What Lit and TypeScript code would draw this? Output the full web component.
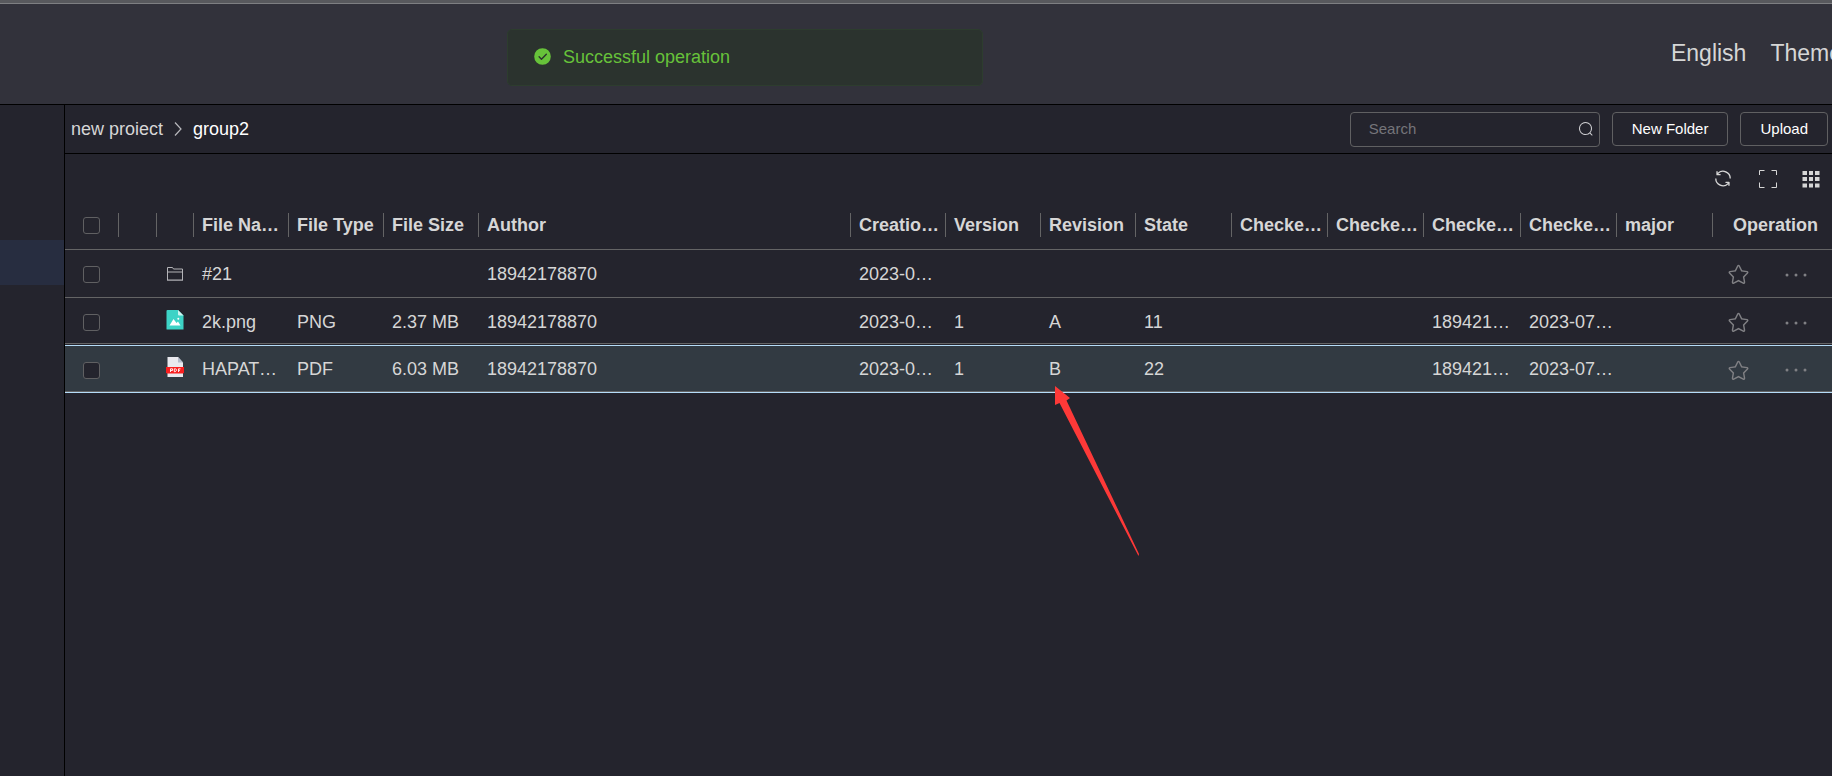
import { LitElement, html, css, svg, nothing } from "lit";
import { customElement, property, state } from "lit/decorators.js";
import { classMap } from "lit/directives/class-map.js";

interface FileRow {
  id: string;
  kind: "folder" | "image" | "pdf";
  cells: string[];
  selected?: boolean;
}

const COLUMNS: { label: string; cls: string }[] = [
  { label: "File Name", cls: "w-field" },
  { label: "File Type", cls: "w-field" },
  { label: "File Size", cls: "w-field" },
  { label: "Author", cls: "w-auto" },
  { label: "Creation Time", cls: "w-field" },
  { label: "Version", cls: "w-field" },
  { label: "Revision", cls: "w-field" },
  { label: "State", cls: "w-wide" },
  { label: "Checked Out By", cls: "w-wide" },
  { label: "Checked Out Time", cls: "w-wide" },
  { label: "Checked In By", cls: "w-last" },
  { label: "Checked In Time", cls: "w-wide" },
  { label: "major", cls: "w-wide" },
];

const ROWS: FileRow[] = [
  {
    id: "r1",
    kind: "folder",
    cells: ["#21", "", "", "18942178870", "2023-07-12", "", "", "", "", "", "", "", ""],
  },
  {
    id: "r2",
    kind: "image",
    cells: ["2k.png", "PNG", "2.37 MB", "18942178870", "2023-07-12", "1", "A", "11", "", "", "18942178870", "2023-07-12 10:20", ""],
  },
  {
    id: "r3",
    kind: "pdf",
    selected: true,
    cells: ["HAPATOM.pdf", "PDF", "6.03 MB", "18942178870", "2023-07-12", "1", "B", "22", "", "", "18942178870", "2023-07-12 10:20", ""],
  },
];

const P = {
  refresh: "M771.776 794.88A384 384 0 0 1 128 512h64a320 320 0 0 0 555.712 216.448H654.72a32 32 0 1 1 0-64h149.056a32 32 0 0 1 32 32v148.928a32 32 0 1 1-64 0v-50.56zM276.288 295.616h92.992a32 32 0 0 1 0 64H220.16a32 32 0 0 1-32-32V178.56a32 32 0 0 1 64 0v50.56A384 384 0 0 1 896.128 512h-64a320 320 0 0 0-555.776-216.384z",
  star: "m512 747.84 228.16 119.936a6.4 6.4 0 0 0 9.28-6.72l-43.52-254.08 184.512-179.904a6.4 6.4 0 0 0-3.52-10.88l-255.104-37.12L517.76 147.904a6.4 6.4 0 0 0-11.52 0L392.192 379.072l-255.104 37.12a6.4 6.4 0 0 0-3.52 10.88L318.08 606.976l-43.584 254.08a6.4 6.4 0 0 0 9.28 6.72L512 747.84zM313.6 924.48a70.4 70.4 0 0 1-102.144-74.24l37.888-220.928L88.96 472.96A70.4 70.4 0 0 1 128 352.896l221.76-32.256 99.2-200.96a70.4 70.4 0 0 1 126.208 0l99.2 200.96 221.824 32.256a70.4 70.4 0 0 1 39.04 120.064L774.72 629.376l37.888 220.928a70.4 70.4 0 0 1-102.144 74.24L512 820.096l-198.4 104.32z",
  search: "m795.904 750.72 124.992 124.928a32 32 0 0 1-45.248 45.248L750.656 795.904a416 416 0 1 1 45.248-45.248zM480 832a352 352 0 1 0 0-704 352 352 0 0 0 0 704z",
  success: "M512 64a448 448 0 1 1 0 896 448 448 0 0 1 0-896zm-55.808 536.384-99.52-99.584a38.4 38.4 0 1 0-54.336 54.336l126.72 126.72a38.272 38.272 0 0 0 54.336 0l262.4-262.464a38.4 38.4 0 1 0-54.272-54.336L456.192 600.384z",
};

const glyph = (d: string, cls: string) =>
  html`<svg class=${cls} viewBox="0 0 1024 1024" aria-hidden="true"><path fill="currentColor" d=${d}></path></svg>`;

@customElement("file-icon")
export class FileIcon extends LitElement {
  static styles = css`
    :host { display: block; line-height: 0; }
    .icon { display: block; width: 18px; height: 20px; }
  `;

  @property() kind: FileRow["kind"] = "folder";

  render() {
    const art = {
      folder: svg`<path d="M1.5 18V5.5H6.5L7.5 7H16.500V18Z M1.500 10H16.500" fill="none" stroke="#b4b4b8"/><path d="M1 18.500H17" stroke="#8c8c92"/>`,
      image: svg`<path d="M1.5 0H12L17.500 5.500V19.500H1Q.5 19.500 .5 19V1Q.5 0 1.500 0Z" fill="#3dd3c6"/><path d="M12 0L17.500 5.500H13Q12 5.500 12 4.500Z" fill="#d0f5f1"/><path d="M3.500 15.500L7.500 9L10.500 13L12 11.500L14.500 15.500Z" fill="#fff"/><circle cx="12.300" cy="8.800" r="1" fill="#fff"/>`,
      pdf: svg`<path d="M1.500 0H12L17 5.500V20H1.500Z" fill="#e9e9ee"/><path d="M12 0L17 5.500H12Z" fill="#b5bccb"/><path d="M0 10H18V15.500L17 16.500H1L0 15.500Z" fill="#f91f1f"/><path d="M4.500 15V11.800H6.500V13.500H4.500M8.300 11.800V14.700H9.200L10.300 13.800V12.300L9.500 11.800ZM12.500 15V11.800H14.500M12.500 13.300H14" fill="none" stroke="#fff" stroke-width=".9"/>`,
    }[this.kind];
    return html`<svg class="icon" viewBox="0 0 18 20" aria-hidden="true">${art}</svg>`;
  }
}

@customElement("app-root")
export class AppRoot extends LitElement {
  static styles = css`
    :host {
      display: block;
      font-family: "Liberation Sans", Arial, sans-serif;
      font-size: 18px;
      line-height: 24px;
      color: #d6d6d6;
    }
    * { box-sizing: border-box; }
    button { font: inherit; color: inherit; background: none; border: 0; padding: 0; cursor: pointer; }
    a { color: inherit; text-decoration: none; }

    .page { position: relative; min-height: 100vh; display: flex; flex-direction: column; background: #24242d; overflow: hidden; }
    .strip { height: 4px; background: #58595d; border-bottom: 1px solid #7e7f82; }
    .header {
      height: 101px; background: #32323b; border-bottom: 1px solid #000;
      display: flex; justify-content: flex-end; align-items: center; padding-bottom: 2px;
    }
    .menu { display: flex; gap: 24px; font-size: 23px; white-space: nowrap; margin-right: -10px; }

    .toast {
      position: absolute; top: 29px; left: 507px; width: 476px; height: 57px;
      display: flex; align-items: center; gap: 11px; padding: 0 25px 2px;
      background: #2b332e; border: 1px solid #2d3d2e; border-radius: 5px; color: #67c23a;
    }
    .toast-icon { width: 19px; height: 19px; }

    .body { flex: 1; display: grid; grid-template-columns: 65px minmax(0, 1fr); }
    .side { border-right: 1px solid #000; padding-top: 135px; }
    .side-item { display: block; height: 45px; background: #272d40; }

    .bar { height: 49px; border-bottom: 1px solid #000; display: flex; align-items: center; justify-content: space-between; padding: 0 4px 0 6px; }
    .crumbs { display: flex; align-items: center; gap: 11px; }
    .crumb-sep { width: 8px; height: 14px; }
    .current { color: #fff; }
    .tools { display: flex; align-items: center; gap: 12px; font-size: 15px; }
    .search { display: flex; align-items: center; width: 250px; height: 35px; border: 1px solid #606062; border-radius: 4px; padding: 0 5px 0 18px; }
    .search input { flex: 1; min-width: 0; font: inherit; color: inherit; background: none; border: 0; outline: 0; padding: 0; }
    .search input::placeholder { color: #75757a; opacity: 1; }
    .search-icon { width: 16px; height: 16px; color: #cfcfd2; }
    .btn { height: 34px; padding: 0 19px; border: 1px solid #606062; border-radius: 4px; color: #fff; }

    .actions { display: flex; justify-content: flex-end; align-items: center; gap: 25px; height: 46px; padding: 4px 12px 0 0; }
    .actions button { display: block; line-height: 0; }
    .tool-icon { display: block; width: 18px; height: 18px; }
    .refresh-icon { display: block; width: 22px; height: 22px; padding-bottom: 1px; }

    table { width: 100%; table-layout: fixed; border-collapse: separate; border-spacing: 0; }
    .w-check { width: 54px; }
    .w-a { width: 38px; }
    .w-b { width: 37px; }
    .w-field { width: 95px; }
    .w-wide { width: 96px; }
    .w-last { width: 97px; }
    .w-op { width: 119px; }
    th, td { padding: 0; text-align: left; border-bottom: 1px solid #646465; }
    th { height: 50px; padding-top: 1px; }
    td { height: 48px; }
    .head { height: 24px; padding: 0 3px 0 8px; border-right: 1px solid #646465; overflow: hidden; white-space: nowrap; text-overflow: ellipsis; }
    .head-op { text-align: center; padding-left: 6px; }
    .cell { padding: 0 3px 0 8px; overflow: hidden; white-space: nowrap; text-overflow: ellipsis; }
    .head-check { display: flex; align-items: center; padding-left: 18px; }
    .short td { height: 46px; padding-top: 2px; }
    .selected td {
      padding-top: 2px; background: #323a42; border-top: 1px solid #24242d;
      box-shadow: inset 0 1px #b5dcf8, 0 1px #b5dcf8;
    }
    .check { padding: 2px 0 0 18px; line-height: 0; }
    input[type="checkbox"] {
      appearance: none; display: block; width: 17px; height: 17px; margin: 0;
      border: 1px solid #606062; border-radius: 3px; background: #24242d;
    }
    .kind { padding: 0 0 4px 9px; }
    .ops { display: flex; align-items: center; gap: 34px; padding: 2px 0 0 14px; color: #808084; }
    .ops button { display: block; line-height: 0; }
    .star { display: block; width: 23px; height: 23px; }
    .dots { display: block; width: 24px; height: 6px; }

    .pointer { position: absolute; top: 386px; left: 1055px; width: 84px; height: 170px; pointer-events: none; }
  `;

  @state() private checked = new Set<string>();

  private toggle(id: string) {
    const next = new Set(this.checked);
    next.has(id) ? next.delete(id) : next.add(id);
    this.checked = next;
  }

  private renderRow(row: FileRow) {
    return html`<tr class=${classMap({ selected: !!row.selected, short: row.kind === "image" })}>
      <td><div class="check"><input type="checkbox" aria-label="Select ${row.cells[0]}" .checked=${this.checked.has(row.id)} @change=${() => this.toggle(row.id)} /></div></td>
      <td></td>
      <td><div class="kind"><file-icon kind=${row.kind}></file-icon></div></td>
      ${row.cells.map((c) => html`<td>${c ? html`<div class="cell">${c}</div>` : nothing}</td>`)}
      <td>
        <div class="ops">
          <button aria-label="Favourite">${glyph(P.star, "star")}</button>
          <button aria-label="More">
            <svg class="dots" viewBox="0 0 24 6" fill="currentColor" aria-hidden="true"><circle cx="3" cy="3" r="1.500"></circle><circle cx="12" cy="3" r="1.500"></circle><circle cx="21" cy="3" r="1.500"></circle></svg>
          </button>
        </div>
      </td>
    </tr>`;
  }

  render() {
    return html`<div class="page">
      <div class="strip"></div>
      <header class="header">
        <nav class="menu"><a href="#lang">English</a><a href="#theme">Theme</a></nav>
      </header>
      <div class="body">
        <aside class="side"><a class="side-item" href="#files" aria-label="Files"></a></aside>
        <main>
          <div class="bar">
            <nav class="crumbs">
              <a href="#project">new proiect</a>
              <svg class="crumb-sep" viewBox="0 0 8 14" fill="none" stroke="#b8b8bc" stroke-width="1.200" aria-hidden="true"><path d="M1 .5L7 7L1 13.500"></path></svg>
              <span class="current">group2</span>
            </nav>
            <div class="tools">
              <label class="search"><input type="text" placeholder="Search" aria-label="Search" />${glyph(P.search, "search-icon")}</label>
              <button class="btn">New Folder</button>
              <button class="btn">Upload</button>
            </div>
          </div>
          <div class="actions">
            <button aria-label="Refresh">${glyph(P.refresh, "refresh-icon")}</button>
            <button aria-label="Full screen">
              <svg class="tool-icon" viewBox="0 0 18 18" fill="none" stroke="currentColor" aria-hidden="true"><path d="M.5 5V.5H5.500M12.500 .5H17.500V5M17.500 12.500V17.500H12.500M5.500 17.500H.5V12.500"></path></svg>
            </button>
            <button aria-label="Grid view">
              <svg class="tool-icon" viewBox="0 0 18 18" fill="currentColor" aria-hidden="true"><path d="M.5 1H5V5H.5ZM7 1H11V5H7ZM13 1H17.500V5H13ZM.5 7H5V11H.5ZM7 7H11V11H7ZM13 7H17.500V11H13ZM.5 13.500H5V17.500H.5ZM7 13.500H11V17.500H7ZM13 13.500H17.500V17.500H13Z"></path></svg>
            </button>
          </div>
          <table>
            <colgroup>
              <col class="w-check" /><col class="w-a" /><col class="w-b" />
              ${COLUMNS.map((c) => html`<col class=${c.cls} />`)}
              <col class="w-op" />
            </colgroup>
            <thead>
              <tr>
                <th><div class="head head-check"><input type="checkbox" aria-label="Select all" /></div></th>
                <th><div class="head"></div></th>
                <th><div class="head"></div></th>
                ${COLUMNS.map((c) => html`<th><div class="head">${c.label}</div></th>`)}
                <th><div class="head-op">Operation</div></th>
              </tr>
            </thead>
            <tbody>${ROWS.map((r) => this.renderRow(r))}</tbody>
          </table>
        </main>
      </div>
      <div class="toast" role="status">${glyph(P.success, "toast-icon")}<span>Successful operation</span></div>
      <svg class="pointer" viewBox="0 0 84 170" aria-hidden="true"><path fill="#fd3938" d="M0 0L15 12L11.500 14.500L84 168L83.500 170L83 169L4.500 17L0 19Z"></path></svg>
    </div>`;
  }
}
